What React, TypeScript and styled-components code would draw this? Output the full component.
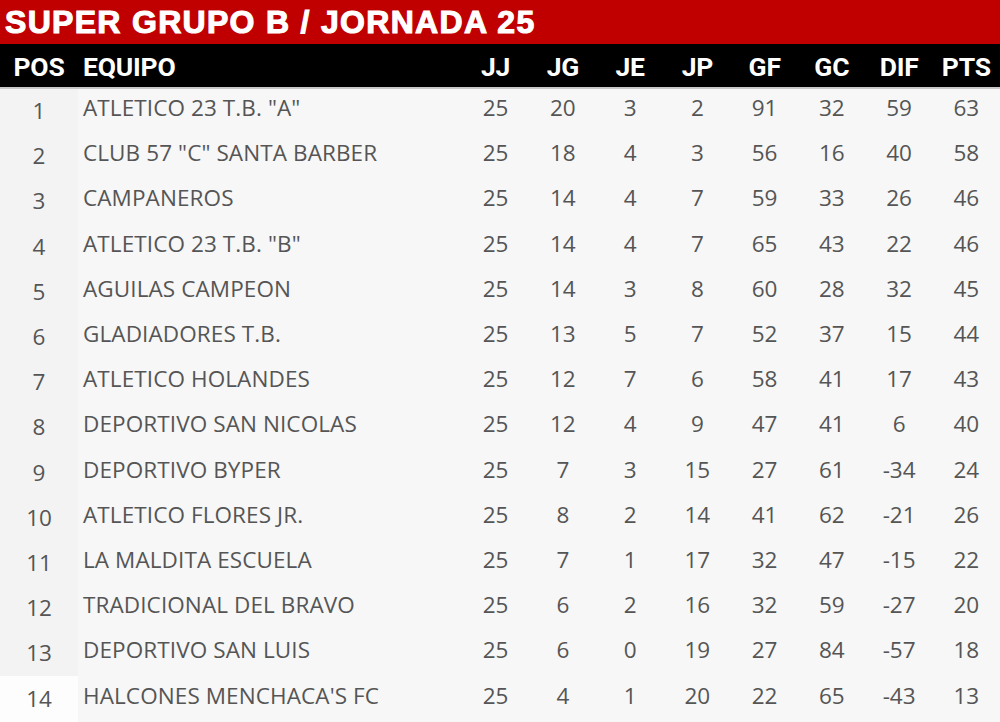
import React from "react";
import styled, { createGlobalStyle } from "styled-components";

const GlobalStyle = createGlobalStyle`
  html, body {
    margin: 0;
    padding: 0;
    background: #f7f7f7;
  }
`;

type Team = [string, number, number, number, number, number, number, number, number];

const teams: Team[] = [
  ['ATLETICO 23 T.B. "A"', 25, 20, 3, 2, 91, 32, 59, 63],
  ['CLUB 57 "C" SANTA BARBER', 25, 18, 4, 3, 56, 16, 40, 58],
  ["CAMPANEROS", 25, 14, 4, 7, 59, 33, 26, 46],
  ['ATLETICO 23 T.B. "B"', 25, 14, 4, 7, 65, 43, 22, 46],
  ["AGUILAS CAMPEON", 25, 14, 3, 8, 60, 28, 32, 45],
  ["GLADIADORES T.B.", 25, 13, 5, 7, 52, 37, 15, 44],
  ["ATLETICO HOLANDES", 25, 12, 7, 6, 58, 41, 17, 43],
  ["DEPORTIVO SAN NICOLAS", 25, 12, 4, 9, 47, 41, 6, 40],
  ["DEPORTIVO BYPER", 25, 7, 3, 15, 27, 61, -34, 24],
  ["ATLETICO FLORES JR.", 25, 8, 2, 14, 41, 62, -21, 26],
  ["LA MALDITA ESCUELA", 25, 7, 1, 17, 32, 47, -15, 22],
  ["TRADICIONAL DEL BRAVO", 25, 6, 2, 16, 32, 59, -27, 20],
  ["DEPORTIVO SAN LUIS", 25, 6, 0, 19, 27, 84, -57, 18],
  ["HALCONES MENCHACA'S FC", 25, 4, 1, 20, 22, 65, -43, 13],
];

const stats = ["JJ", "JG", "JE", "JP", "GF", "GC", "DIF", "PTS"];

const Board = styled.div`
  width: 1000px;
  height: 722px;
  overflow: hidden;
  background: #f7f7f7;
`;

const Title = styled.h1`
  margin: 0;
  height: 44px;
  background: #c00000;
  color: #fff;
  display: flex;
  align-items: center;
  padding-left: 5px;
  font-family: "Liberation Sans", Arial, sans-serif;
  font-weight: 700;
  font-size: 32px;
  letter-spacing: 1.3px;
  -webkit-text-stroke: 1.1px #fff;
  line-height: 1;
`;

const Grid = styled.div`
  display: grid;
  grid-template-columns: 78px 384px repeat(8, 1fr);
`;

const HeadRow = styled(Grid)`
  height: 45px;
  padding-top: 2px;
  background: #000;
  border-bottom: 2px solid #c8c8c8;
  box-sizing: border-box;
  align-items: center;
  color: #fff;
  font-family: Roboto, "Liberation Sans", sans-serif;
  font-weight: 700;
  font-size: 26.5px;
  letter-spacing: -0.2px;
`;

const HeadCell = styled.div<{ $left?: boolean }>`
  text-align: ${(p) => (p.$left ? "left" : "center")};
  padding-left: ${(p) => (p.$left ? "5px" : "0")};
`;

const Row = styled(Grid)`
  height: 45.2px;
  align-items: center;
  color: #555;
  font-family: "Open Sans", "Liberation Sans", sans-serif;
  font-size: 22.5px;
`;

const PosCell = styled.div<{ $last?: boolean }>`
  height: 100%;
  display: flex;
  align-items: center;
  justify-content: center;
  padding-bottom: 2px;
  box-sizing: border-box;
  background: ${(p) => (p.$last ? "#fdfdfd" : "#f3f3f3")};
`;

const TeamCell = styled.div`
  padding-left: 5px;
  padding-bottom: 8px;
  letter-spacing: 0.1px;
  white-space: nowrap;
`;

const StatCell = styled.div`
  text-align: center;
  padding-bottom: 8px;
`;

export default function App() {
  return (
    <Board>
      <GlobalStyle />
      <Title>SUPER GRUPO B / JORNADA 25</Title>
      <HeadRow>
        <HeadCell>POS</HeadCell>
        <HeadCell $left>EQUIPO</HeadCell>
        {stats.map((s) => (
          <HeadCell key={s}>{s}</HeadCell>
        ))}
      </HeadRow>
      {teams.map(([name, ...nums], i) => (
        <Row key={name}>
          <PosCell $last={i === teams.length - 1}>{i + 1}</PosCell>
          <TeamCell>{name}</TeamCell>
          {nums.map((n, j) => (
            <StatCell key={j}>{n}</StatCell>
          ))}
        </Row>
      ))}
    </Board>
  );
}
